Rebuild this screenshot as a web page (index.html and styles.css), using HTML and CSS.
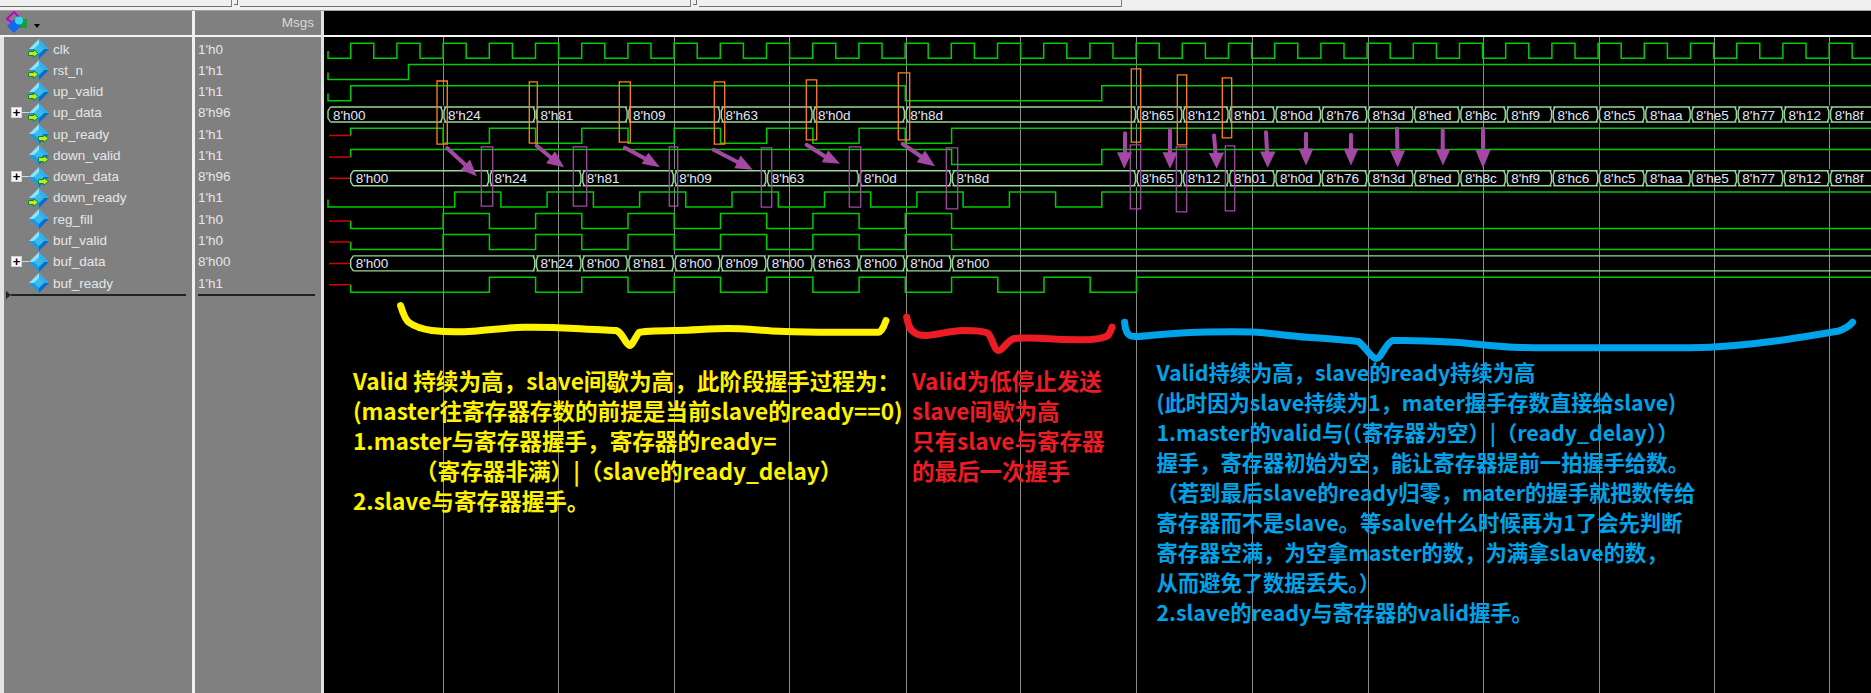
FILE: index.html
```html
<!DOCTYPE html>
<html lang="zh-CN">
<head>
<meta charset="utf-8">
<title>Wave</title>
<link rel="stylesheet" href="styles.css">
</head>
<body>
<svg class="defs" width="0" height="0" aria-hidden="true">
  <defs>
    <symbol id="gem" viewBox="0 0 20 20">
      <polygon class="gem-tl" points="10,0 10,6 5,10 0,10"/>
      <polygon class="gem-tr" points="10,0 20,10 15,10 10,6"/>
      <polygon class="gem-bl" points="0,10 5,10 10,14 10,20"/>
      <polygon class="gem-br" points="20,10 15,10 10,14 10,20"/>
      <polygon class="gem-c" points="10,5 15,10 10,15 5,10"/>
    </symbol>
    <symbol id="arrow" viewBox="0 0 11 9">
      <path class="sig-arrow" d="M.5 2.5H5.5V.5L10.5 4.5 5.5 8.5V6.5H.5Z"/>
    </symbol>
  </defs>
</svg>

<header class="top">
  <div class="tab tab-a"></div><div class="grip"></div>
  <div class="tab tab-b"></div><div class="grip"></div>
  <div class="tab tab-c"></div>
</header>

<main class="main">
  <section class="col names">
    <div class="col-head head-names">
      <svg class="logo" viewBox="0 0 24 22">
        <polygon class="logo-purple" points="8,1 15,8 8,13 1,8"/>
        <rect class="logo-green" x="12" y="8" width="9" height="9"/>
        <polygon class="logo-blue" points="8,8 15,15 8,22 1,15"/>
        <circle class="logo-cyan" cx="13" cy="9.5" r="4"/>
      </svg>
      <span class="drop"></span>
    </div>
    <div class="col-body names-body">
      <div class="row"><span class="nox"></span><svg class="sig" viewBox="0 0 20 20"><use href="#gem"/><use href="#arrow" x="-1" y="10" width="11" height="9"/></svg><span class="name">clk</span></div>
      <div class="row"><span class="nox"></span><svg class="sig" viewBox="0 0 20 20"><use href="#gem"/><use href="#arrow" x="-1" y="10" width="11" height="9"/></svg><span class="name">rst_n</span></div>
      <div class="row"><span class="nox"></span><svg class="sig" viewBox="0 0 20 20"><use href="#gem"/><use href="#arrow" x="-1" y="10" width="11" height="9"/></svg><span class="name">up_valid</span></div>
      <div class="row"><span class="exp">+</span><span class="stub"></span><svg class="sig" viewBox="0 0 20 20"><use href="#gem"/><use href="#arrow" x="-1" y="10" width="11" height="9"/></svg><span class="name">up_data</span></div>
      <div class="row"><span class="nox"></span><svg class="sig" viewBox="0 0 20 20"><use href="#gem"/><use href="#arrow" x="9" y="10" width="11" height="9"/></svg><span class="name">up_ready</span></div>
      <div class="row"><span class="nox"></span><svg class="sig" viewBox="0 0 20 20"><use href="#gem"/><use href="#arrow" x="9" y="10" width="11" height="9"/></svg><span class="name">down_valid</span></div>
      <div class="row"><span class="exp">+</span><span class="stub"></span><svg class="sig" viewBox="0 0 20 20"><use href="#gem"/><use href="#arrow" x="9" y="10" width="11" height="9"/></svg><span class="name">down_data</span></div>
      <div class="row"><span class="nox"></span><svg class="sig" viewBox="0 0 20 20"><use href="#gem"/><use href="#arrow" x="-1" y="10" width="11" height="9"/></svg><span class="name">down_ready</span></div>
      <div class="row"><span class="nox"></span><svg class="sig" viewBox="0 0 20 20"><use href="#gem"/></svg><span class="name">reg_fill</span></div>
      <div class="row"><span class="nox"></span><svg class="sig" viewBox="0 0 20 20"><use href="#gem"/></svg><span class="name">buf_valid</span></div>
      <div class="row"><span class="exp">+</span><span class="stub"></span><svg class="sig" viewBox="0 0 20 20"><use href="#gem"/></svg><span class="name">buf_data</span></div>
      <div class="row"><span class="nox"></span><svg class="sig" viewBox="0 0 20 20"><use href="#gem"/></svg><span class="name">buf_ready</span></div>
      <div class="rule rule-names"><span class="tri"></span><span class="line"></span></div>
    </div>
  </section>

  <section class="col values">
    <div class="col-head head-values">Msgs</div>
    <div class="col-body values-body">
      <div class="row val">1'h0</div>
      <div class="row val">1'h1</div>
      <div class="row val">1'h1</div>
      <div class="row val">8'h96</div>
      <div class="row val">1'h1</div>
      <div class="row val">1'h1</div>
      <div class="row val">8'h96</div>
      <div class="row val">1'h1</div>
      <div class="row val">1'h0</div>
      <div class="row val">1'h0</div>
      <div class="row val">8'h00</div>
      <div class="row val">1'h1</div>
      <div class="rule rule-values"><span class="line"></span></div>
    </div>
  </section>

  <section class="col wave">
    <div class="col-head head-wave"></div>
    <svg class="wave-svg" viewBox="324 36.5 1547 656.5" width="1547" height="656.5">
      <defs>
        <g id="tick">
          <rect class="tick-gap" x="-.8" y="-1.5" width="1.6" height="18"/>
          <path class="bus" d="M-2.5 0L-.9 4V11L-2.5 15M2.5 0L.9 4V11L2.5 15"/>
        </g>
        <g id="tail">
          <use href="#tick" x="1136.4"/><use href="#tick" x="1182.7"/><use href="#tick" x="1228.9"/><use href="#tick" x="1275.1"/>
          <use href="#tick" x="1321.3"/><use href="#tick" x="1367.5"/><use href="#tick" x="1413.8"/><use href="#tick" x="1460"/>
          <use href="#tick" x="1506.2"/><use href="#tick" x="1552.4"/><use href="#tick" x="1598.6"/><use href="#tick" x="1644.9"/>
          <use href="#tick" x="1691.1"/><use href="#tick" x="1737.3"/><use href="#tick" x="1783.5"/><use href="#tick" x="1829.7"/>
          <text class="bus-text" x="1141.4" y="12.5">8'h65</text><text class="bus-text" x="1187.7" y="12.5">8'h12</text>
          <text class="bus-text" x="1233.9" y="12.5">8'h01</text><text class="bus-text" x="1280.1" y="12.5">8'h0d</text>
          <text class="bus-text" x="1326.3" y="12.5">8'h76</text><text class="bus-text" x="1372.5" y="12.5">8'h3d</text>
          <text class="bus-text" x="1418.8" y="12.5">8'hed</text><text class="bus-text" x="1465" y="12.5">8'h8c</text>
          <text class="bus-text" x="1511.2" y="12.5">8'hf9</text><text class="bus-text" x="1557.4" y="12.5">8'hc6</text>
          <text class="bus-text" x="1603.6" y="12.5">8'hc5</text><text class="bus-text" x="1649.9" y="12.5">8'haa</text>
          <text class="bus-text" x="1696.1" y="12.5">8'he5</text><text class="bus-text" x="1742.3" y="12.5">8'h77</text>
          <text class="bus-text" x="1788.5" y="12.5">8'h12</text><text class="bus-text" x="1834.7" y="12.5">8'h8f</text>
        </g>
      </defs>

      <path class="grid" d="M443.5 36V693M558.5 36V693M674.5 36V693M789.5 36V693M906.5 36V693M1020.5 36V693M1136.5 36V693M1252.5 36V693M1368.5 36V693M1483.5 36V693M1599.5 36V693M1714.5 36V693M1829.5 36V693"/>

      <path class="low-x" d="M329 135H350.7M329 156.5H350.7M329 177.8H350.7M329 220.4H350.7M329 241.6H350.7M329 262.9H350.7M329 284.2H350.7"/>

      <path class="sig-line" d="M328 50.5V57.7H350.7V42.7h23.1v15h23.1v-15h23.1v15h23.1v-15h23.1v15h23.1v-15h23.1v15h23.1v-15h23.1v15h23.1v-15h23.1v15h23.1v-15h23.1v15h23.1v-15h23.1v15h23.1v-15h23.1v15h23.1v-15h23.1v15h23.1v-15h23.1v15h23.1v-15h23.1v15h23.1v-15h23.1v15h23.1v-15h23.1v15h23.1v-15h23.1v15h23.1v-15h23.1v15h23.1v-15h23.1v15h23.1v-15h23.1v15h23.1v-15h23.1v15h23.1v-15h23.1v15h23.1v-15h23.1v15h23.1v-15h23.1v15h23.1v-15h23.1v15h23.1v-15h23.1v15h23.1v-15h23.1v15h23.1v-15h23.1v15h23.1v-15h23.1v15h23.1v-15h23.1v15h23.1v-15h23.1v15h23.1v-15h23.1v15h23.1v-15h23.1v15h23.1v-15h23.1v15h23.1v-15h23.1v15h23.1v-15h23.1v15h23.1v-15h23.1v15h23.1v-15"/>
      <path class="sig-line" d="M328 72V79H408.5V63.9H1871"/>
      <path class="sig-line" d="M328 93V100.2H350.7V85.2H905.3V100.2H1101.8V85.2H1871"/>
      <path class="sig-line" d="M350.7 135V127.8H443.1V142.8H489.4V127.8H535.6V142.8H581.8V127.8H628V142.8H674.2V127.8H720.5V142.8H766.7V127.8H812.9V142.8H859.1V127.8H905.3V142.8H951.6V127.8H1871"/>
      <path class="sig-line" d="M350.7 156.5V149H951.6V164H1101.8V149H1871"/>
      <path class="sig-line" d="M328 199V206.6H454.7V191.6H500.9V206.6H547.1V191.6H593.4V206.6H639.6V191.6H685.8V206.6H732V191.6H778.3V206.6H824.5V191.6H870.7V206.6H916.9V191.6H963.1V206.6H1009.4V191.6H1055.6V206.6H1101.8V191.6H1871"/>
      <path class="sig-line" d="M350.7 220.4V227.9H443.1V212.9H489.4V227.9H535.6V212.9H581.8V227.9H628V212.9H674.2V227.9H720.5V212.9H766.7V227.9H812.9V212.9H859.1V227.9H905.3V212.9H951.6V227.9H1871"/>
      <path class="sig-line" d="M350.7 241.6V249.1H443.1V234.1H489.4V249.1H535.6V234.1H581.8V249.1H628V234.1H674.2V249.1H720.5V234.1H766.7V249.1H812.9V234.1H859.1V249.1H905.3V234.1H951.6V249.1H1871"/>
      <path class="sig-line" d="M350.7 284.2V291.7H489.4V276.7H535.6V291.7H581.8V276.7H628V291.7H674.2V276.7H720.5V291.7H766.7V276.7H812.9V291.7H859.1V276.7H905.3V291.7H951.6V276.7H997.8V291.7H1044V276.7H1090.2V291.7H1136.4V276.7H1871"/>

      <g transform="translate(0 106.5)">
        <path class="bus" d="M330.5 0L328 4V11L330.5 15M330.5 0H1871M330.5 15H1871"/>
        <use href="#tick" x="443.1"/><use href="#tick" x="535.6"/><use href="#tick" x="628"/><use href="#tick" x="720.5"/><use href="#tick" x="812.9"/><use href="#tick" x="905.3"/>
        <text class="bus-text" x="333" y="12.5">8'h00</text><text class="bus-text" x="448.1" y="12.5">8'h24</text>
        <text class="bus-text" x="540.6" y="12.5">8'h81</text><text class="bus-text" x="633" y="12.5">8'h09</text>
        <text class="bus-text" x="725.5" y="12.5">8'h63</text><text class="bus-text" x="817.9" y="12.5">8'h0d</text>
        <text class="bus-text" x="910.3" y="12.5">8'h8d</text>
        <use href="#tail"/>
      </g>
      <g transform="translate(0 170.3)">
        <path class="bus" d="M353.2 0L350.7 4V11L353.2 15M353.2 0H1871M353.2 15H1871"/>
        <use href="#tick" x="489.4"/><use href="#tick" x="581.8"/><use href="#tick" x="674.2"/><use href="#tick" x="766.7"/><use href="#tick" x="859.1"/><use href="#tick" x="951.6"/>
        <text class="bus-text" x="355.7" y="12.5">8'h00</text><text class="bus-text" x="494.4" y="12.5">8'h24</text>
        <text class="bus-text" x="586.8" y="12.5">8'h81</text><text class="bus-text" x="679.2" y="12.5">8'h09</text>
        <text class="bus-text" x="771.7" y="12.5">8'h63</text><text class="bus-text" x="864.1" y="12.5">8'h0d</text>
        <text class="bus-text" x="956.6" y="12.5">8'h8d</text>
        <use href="#tail"/>
      </g>
      <g transform="translate(0 255.4)">
        <path class="bus" d="M353.2 0L350.7 4V11L353.2 15M353.2 0H1871M353.2 15H1871"/>
        <use href="#tick" x="535.6"/><use href="#tick" x="581.8"/><use href="#tick" x="628"/><use href="#tick" x="674.2"/><use href="#tick" x="720.5"/>
        <use href="#tick" x="766.7"/><use href="#tick" x="812.9"/><use href="#tick" x="859.1"/><use href="#tick" x="905.3"/><use href="#tick" x="951.6"/>
        <text class="bus-text" x="355.7" y="12.5">8'h00</text><text class="bus-text" x="540.6" y="12.5">8'h24</text>
        <text class="bus-text" x="586.8" y="12.5">8'h00</text><text class="bus-text" x="633" y="12.5">8'h81</text>
        <text class="bus-text" x="679.2" y="12.5">8'h00</text><text class="bus-text" x="725.5" y="12.5">8'h09</text>
        <text class="bus-text" x="771.7" y="12.5">8'h00</text><text class="bus-text" x="817.9" y="12.5">8'h63</text>
        <text class="bus-text" x="864.1" y="12.5">8'h00</text><text class="bus-text" x="910.3" y="12.5">8'h0d</text>
        <text class="bus-text" x="956.6" y="12.5">8'h00</text>
      </g>

      <path class="box-orange" d="M437 80.5H447.3V143.7H437ZM529.3 81.3H537.3V142.7H529.3ZM619.3 81.3H630.3V141.7H619.3ZM714.3 81.3H724.7V143.7H714.3ZM806.3 79.3H816.7V139.3H806.3ZM898.3 72.3H909.7V139.3H898.3ZM1131.3 68.3H1140.7V141.7H1131.3ZM1177.3 74.3H1186.7V144.3H1177.3ZM1222.3 77.3H1231.7V137.3H1222.3Z"/>
      <path class="box-purple" d="M481.3 146.3H492.7V205.7H481.3ZM573.3 146.3H586.7V205.7H573.3ZM669.3 146.3H677.7V205.7H669.3ZM761.3 147.3H771.7V206.7H761.3ZM849.3 146.3H860.7V206.7H849.3ZM946.3 147.3H957.7V208.3H946.3ZM1130.3 144.3H1140.7V208.3H1130.3ZM1176.3 146.3H1186.7V211.3H1176.3ZM1225.3 145.3H1234.7V210.3H1225.3Z"/>

      <path class="arrow-shaft" d="M447.3 147.7L465.5 164.5M536.7 145.3L550.5 156.7M625 147.3L645 158M713.7 149.3L737.5 161.5M806.7 144.3L825 156M902.7 143.3L921 156"/>
      <polygon class="arrow-head" points="476.7,175.7 470,159 460.7,169.3"/>
      <polygon class="arrow-head" points="564,166.7 555,150.7 546,162.7"/>
      <polygon class="arrow-head" points="660,166.7 648.3,152.3 641.7,163.3"/>
      <polygon class="arrow-head" points="752.7,169.3 740.7,155 734.3,167.7"/>
      <polygon class="arrow-head" points="840,163.3 828.3,150 821.7,161.7"/>
      <polygon class="arrow-head" points="935,165.7 925,150 916.7,161.7"/>

      <path class="arrow-shaft" d="M1125 132.7V152M1170 129.3V152M1214 135L1215.5 152M1266 131.7L1267 151M1306 133.3V149M1351 134.3V149M1397 128.3L1397.4 151M1442.7 129.3V149M1483 128.3V150"/>
      <polygon class="arrow-head" points="1124.3,168.3 1117,151.7 1132,151.7"/>
      <polygon class="arrow-head" points="1170,168.3 1162.5,151.7 1177.5,151.7"/>
      <polygon class="arrow-head" points="1216.7,168.3 1208.7,152.5 1224,152"/>
      <polygon class="arrow-head" points="1267.7,167.3 1260,151 1275.5,151"/>
      <polygon class="arrow-head" points="1306,165 1298.5,148 1313.5,148"/>
      <polygon class="arrow-head" points="1351,165 1343.5,148 1358.5,148"/>
      <polygon class="arrow-head" points="1397.7,166.7 1390,150 1405,150"/>
      <polygon class="arrow-head" points="1443,165 1435.5,148.5 1450.5,148.5"/>
      <polygon class="arrow-head" points="1483,167.7 1475.5,149.5 1490.5,149.5"/>

      <path class="brace brace-yellow" d="M400.6 305C403 313 405 319 409 322C416 327 424 329 432 330C445 331.5 460 331.5 473 330.7C490 329.5 507 327 524 326.7C541 326.5 558 327 575 328C590 329 606 329.5 616 330C620 331 622 335 625 340C627 343 629 345 630 345C632 345 636 336 639 332C643 330.5 660 330.3 677 330C694 329.7 711 328 728 328C745 328 762 330 779 330.7C796 331.3 813 331.7 830 331.7H878.7C881 331.7 884 326 886 320"/>
      <path class="brace brace-red" d="M906.7 316.7C908 323 909 329 914 331.7C918 335 922 335.2 927 335C939 334 951 330 963 330C972 330 984 330 988 333C992 336 994 350 998.6 350C1003 350 1006 341 1014 338C1024 337 1034 337.7 1044.5 338C1060 339 1075 339.5 1090.4 339C1097 338.5 1104 338 1108 335C1110 332 1111 330 1112 326.7"/>
      <path class="brace brace-blue" d="M1124.6 321.7C1125 328 1127 334 1131 335.5C1134 336.5 1136 336 1139 336C1159 334.5 1178 332 1198 331.7C1218 331.3 1238 331 1257 331.7C1274 333 1290 335.5 1306.6 336.7C1325 338 1342 339 1358 341C1364 344 1371 358 1376.4 358C1381 358 1386 342 1392.7 340C1413 339.5 1434 340.5 1454 341.7C1474 343 1493 346 1513 346.7C1539 347.5 1566 347.3 1592 347.3H1690C1720 347 1750 344 1779 340C1800 337 1820 333.5 1838 330.7C1843 329 1849 326 1852.6 321.7"/>
    </svg>

    <div class="note note-yellow">
      <div>Valid 持续为高，slave间歇为高，此阶段握手过程为：</div>
      <div>(master往寄存器存数的前提是当前slave的ready==0)</div>
      <div>1.master与寄存器握手，寄存器的ready=</div>
      <div class="indent">（寄存器非满）|（slave的ready_delay）</div>
      <div>2.slave与寄存器握手。</div>
    </div>
    <div class="note note-red">
      <div>Valid为低停止发送</div>
      <div>slave间歇为高</div>
      <div>只有slave与寄存器</div>
      <div>的最后一次握手</div>
    </div>
    <div class="note note-blue">
      <div>Valid持续为高，slave的ready持续为高</div>
      <div>(此时因为slave持续为1，mater握手存数直接给slave)</div>
      <div>1.master的valid与(（寄存器为空）|（ready_delay））</div>
      <div>握手，寄存器初始为空，能让寄存器提前一拍握手给数。</div>
      <div>（若到最后slave的ready归零，mater的握手就把数传给</div>
      <div>寄存器而不是slave。等salve什么时候再为1了会先判断</div>
      <div>寄存器空满，为空拿master的数，为满拿slave的数，</div>
      <div>从而避免了数据丢失。）</div>
      <div>2.slave的ready与寄存器的valid握手。</div>
    </div>
  </section>
</main>
</body>
</html>
```
FILE: styles.css
```css
* { box-sizing: border-box; }
html, body { margin: 0; height: 100%; }
body {
  width: 1871px;
  height: 693px;
  overflow: hidden;
  background: #000;
  font-family: "Liberation Sans", Arial, sans-serif;
  display: flex;
  flex-direction: column;
}
.defs { position: absolute; }

.top {
  height: 11px;
  flex: none;
  display: flex;
  align-items: flex-start;
  background: #f0f0f0;
  border-bottom: 1.5px solid #a2a2a2;
}
.tab {
  height: 7px;
  border-right: 1px solid #808080;
  border-bottom: 1.5px solid #707070;
}
.tab-a { width: 232px; }
.tab-b { width: 451px; }
.tab-c { width: 423px; }
.grip {
  width: 4px;
  height: 5px;
  margin: 0 2px;
  border-right: 1px solid #707070;
  border-bottom: 1px solid #707070;
}

.main {
  flex: 1;
  min-height: 0;
  display: grid;
  grid-template-columns: 192px 132px 1547px;
}
.col { display: flex; flex-direction: column; min-height: 0; }
.col-head {
  height: 25.5px;
  flex: none;
  background: #808080;
  border-bottom: 2.5px solid #f4f4f4;
  display: flex;
  align-items: center;
}
.names { background: #808080; }
.head-names { padding-left: 6px; gap: 4px; }
.logo { width: 24px; height: 22px; display: block; margin-top: -1px; }
.logo-purple { fill: none; stroke: #c000c8; stroke-width: 2; }
.logo-green { fill: #1c9a3c; }
.logo-blue { fill: #1468f0; }
.logo-cyan { fill: #30d8f0; }
.drop {
  width: 0;
  height: 0;
  margin-top: 7px;
  border-left: 3.5px solid transparent;
  border-right: 3.5px solid transparent;
  border-top: 4px solid #000;
}

.names-body {
  flex: 1;
  padding-top: 2px;
  border-left: 4px solid #e4e4e4;
  background: #808080;
}
.row { height: 21.27px; display: flex; align-items: center; }
.names-body .row { padding-left: 7px; }
.nox { width: 18px; flex: none; }
.exp {
  width: 11px;
  height: 11px;
  flex: none;
  display: flex;
  align-items: center;
  justify-content: center;
  background: #f8f8fc;
  border: 1px solid #d0d0d4;
  color: #000;
  font-size: 13px;
  font-weight: 700;
  line-height: 1;
}
.stub { width: 7px; height: 1px; flex: none; background: #d8d8d8; }
.sig { width: 20px; height: 20px; flex: none; overflow: visible; }
.name { margin-left: 4px; font-size: 13.5px; color: #e6e6e6; white-space: nowrap; }
.gem-tl { fill: #8ae4fc; }
.gem-tr { fill: #2eb0ee; }
.gem-bl { fill: #1a9ae4; }
.gem-br { fill: #0c6cc8; }
.gem-c { fill: #36bcf2; }
.sig-arrow { fill: #b6ec2a; stroke: #12862a; stroke-width: 1; }

.values { background: #808080; border-left: 3px solid #f0f0f0; border-right: 3.5px solid #e0e0e0; }
.head-values {
  justify-content: flex-end;
  padding-right: 7px;
  font-size: 13.5px;
  color: #d8d8d8;
}
.values-body { flex: 1; padding-top: 2px; padding-left: 3px; background: #808080; }
.val { font-size: 13.5px; color: #e6e6e6; white-space: nowrap; }

.rule { height: 3px; display: flex; align-items: center; }
.line { display: block; height: 1.5px; background: #222; }
.rule-names { padding-left: 2px; width: 182px; }
.rule-names .line { flex: 1; }
.tri {
  width: 0;
  height: 0;
  flex: none;
  border-left: 5px solid #222;
  border-top: 4.5px solid transparent;
  border-bottom: 4.5px solid transparent;
}
.rule-values { width: 117px; }
.rule-values .line { flex: 1; }

.wave { position: relative; background: #000; }
.head-wave { background: #000; }
.wave-svg { display: block; flex: none; }

.grid { fill: none; stroke: #8a8a8a; stroke-width: 1; }
.sig-line { fill: none; stroke: #00cc00; stroke-width: 1.5; }
.low-x { fill: none; stroke: #d80000; stroke-width: 1.5; }
.bus { fill: none; stroke: #98d898; stroke-width: 1.4; }
.tick-gap { fill: #000; }
.bus-text {
  font-family: "Liberation Sans", Arial, sans-serif;
  font-size: 13.5px;
  fill: #e2e8f6;
}
.box-orange { fill: none; stroke: #ff7f27; stroke-width: 1.3; }
.box-purple { fill: none; stroke: #a349a4; stroke-width: 1.3; }
.arrow-shaft { fill: none; stroke: #a349a4; stroke-width: 4; stroke-linecap: round; }
.arrow-head { fill: #a349a4; }
.brace { fill: none; stroke-width: 7; stroke-linecap: round; stroke-linejoin: round; }
.brace-yellow { stroke: #fff200; }
.brace-red { stroke: #ed1c24; }
.brace-blue { stroke: #00a2e8; }

.note {
  position: absolute;
  font-family: "Noto Sans CJK SC", "Liberation Sans", sans-serif;
  font-weight: 700;
  line-height: 30px;
  white-space: nowrap;
}
.note-yellow { left: 29px; top: 355px; color: #fff200; font-size: 22.6px; }
.note-red { left: 588px; top: 354px; color: #ed1c24; font-size: 22.5px; }
.note-blue { left: 832.5px; top: 346px; color: #00a2e8; font-size: 21.3px; }
.indent { margin-left: 62px; }
```
